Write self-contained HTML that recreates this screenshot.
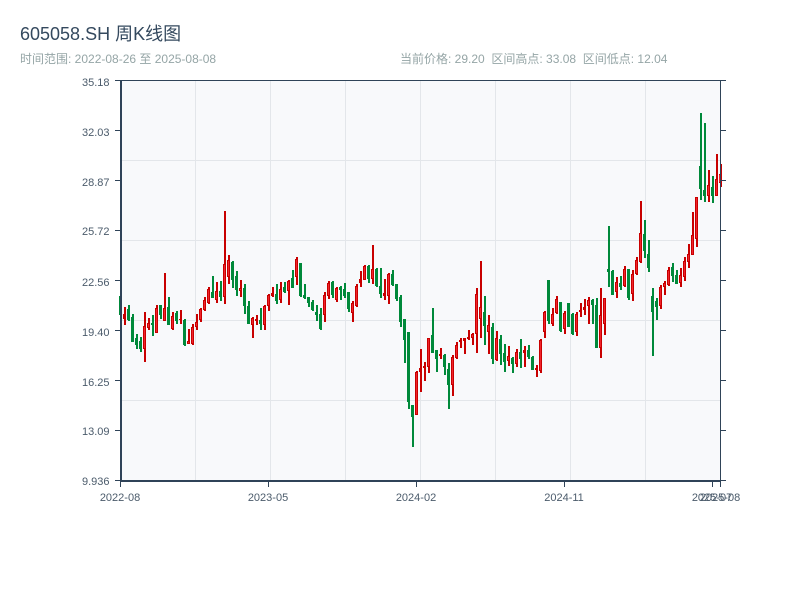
<!DOCTYPE html>
<html lang="zh">
<head>
<meta charset="utf-8">
<title>605058.SH 周K线图</title>
<style>
html,body{margin:0;padding:0;background:#fff;width:800px;height:600px;overflow:hidden}
svg{display:block;position:absolute;left:0;top:0}
text{font-family:"WenQuanYi Zen Hei","Liberation Sans",sans-serif}
</style>
</head>
<body>
<svg width="800" height="600" viewBox="0 0 800 600" xmlns="http://www.w3.org/2000/svg">
<rect x="0" y="0" width="800" height="600" fill="#fff"/>
<text x="20" y="40" font-size="18" fill="#34495e">605058.SH 周K线图</text>
<text x="20" y="63" font-size="12" fill="#95a5a6">时间范围: 2022-08-26 至 2025-08-08</text>
<text x="400" y="63" font-size="12" fill="#95a5a6" xml:space="preserve">当前价格: 29.20  区间高点: 33.08  区间低点: 12.04</text>

<rect x="121" y="81" width="600" height="400" fill="#f8f9fb"/>
<g shape-rendering="crispEdges" fill="#e3e6ea">
<rect x="121" y="160" width="599" height="1"/><rect x="121" y="240" width="599" height="1"/><rect x="121" y="320" width="599" height="1"/><rect x="121" y="400" width="599" height="1"/>
<rect x="195" y="81" width="1" height="399"/><rect x="270" y="81" width="1" height="399"/><rect x="345" y="81" width="1" height="399"/><rect x="420" y="81" width="1" height="399"/><rect x="495" y="81" width="1" height="399"/><rect x="570" y="81" width="1" height="399"/><rect x="645" y="81" width="1" height="399"/>
</g>

<g shape-rendering="crispEdges">
<path fill="#00893a" d="M119 296h3V315h-3zM128 305h2V321h-2zM127 309h3V320h-3zM132 314h2V342h-2zM131 317h3V342h-3zM136 334h2V349h-2zM135 338h3V345h-3zM140 337h2V352h-2zM139 341h3V349h-3zM152 315h2V336h-2zM151 323h3V325h-3zM160 305h2V319h-2zM159 305h3V315h-3zM168 297h2V325h-2zM167 307h3V325h-3zM176 311h2V324h-2zM175 313h3V321h-3zM184 319h2V346h-2zM183 320h3V345h-3zM212 276h2V298h-2zM211 292h3V298h-3zM220 281h2V301h-2zM219 291h3V297h-3zM232 261h2V288h-2zM231 262h3V280h-3zM236 271h2V296h-2zM235 276h3V290h-3zM244 284h2V314h-2zM243 288h3V306h-3zM248 301h2V324h-2zM247 306h3V324h-3zM260 308h2V330h-2zM259 320h3V324h-3zM276 284h2V304h-2zM275 294h3V301h-3zM284 282h2V293h-2zM283 287h3V292h-3zM292 270h2V288h-2zM291 278h3V288h-3zM300 263h2V297h-2zM299 263h3V296h-3zM304 284h2V299h-2zM303 295h3V298h-3zM308 297h2V307h-2zM307 297h3V303h-3zM312 300h2V311h-2zM311 302h3V310h-3zM316 305h2V321h-2zM315 312h3V315h-3zM320 308h2V330h-2zM319 314h3V329h-3zM332 281h2V298h-2zM331 282h3V295h-3zM340 286h2V300h-2zM339 287h3V290h-3zM344 283h2V298h-2zM343 289h3V296h-3zM348 292h2V312h-2zM347 292h3V309h-3zM368 265h2V283h-2zM367 266h3V279h-3zM376 268h2V287h-2zM375 269h3V286h-3zM380 268h2V298h-2zM379 286h3V294h-3zM392 270h2V286h-2zM391 274h3V285h-3zM396 284h2V301h-2zM395 284h3V299h-3zM400 295h2V327h-2zM399 297h3V322h-3zM404 319h2V363h-2zM403 319h3V340h-3zM408 332h2V409h-2zM407 332h3V402h-3zM412 405h2V447h-2zM411 405h3V417h-3zM432 308h2V353h-2zM431 335h3V353h-3zM436 350h2V372h-2zM435 350h3V359h-3zM444 354h2V375h-2zM443 355h3V367h-3zM448 363h2V409h-2zM447 369h3V385h-3zM484 296h2V345h-2zM483 312h3V326h-3zM492 323h2V364h-2zM491 327h3V359h-3zM500 335h2V365h-2zM499 339h3V354h-3zM504 344h2V372h-2zM503 353h3V362h-3zM512 357h2V373h-2zM511 358h3V364h-3zM520 339h2V368h-2zM519 352h3V359h-3zM528 345h2V359h-2zM527 350h3V357h-3zM532 356h2V370h-2zM531 357h3V370h-3zM548 280h2V324h-2zM547 280h3V321h-3zM560 302h2V332h-2zM559 302h3V331h-3zM568 303h2V327h-2zM567 303h3V327h-3zM572 313h2V335h-2zM571 314h3V334h-3zM592 299h2V324h-2zM591 300h3V305h-3zM596 298h2V348h-2zM595 305h3V348h-3zM608 226h2V287h-2zM607 269h3V272h-3zM612 270h2V295h-2zM611 271h3V295h-3zM620 276h2V290h-2zM619 283h3V287h-3zM628 269h2V300h-2zM627 269h3V298h-3zM644 220h2V258h-2zM643 234h3V251h-3zM648 240h2V272h-2zM647 254h3V268h-3zM652 288h2V356h-2zM651 296h3V312h-3zM656 298h2V320h-2zM655 301h3V307h-3zM672 263h2V282h-2zM671 267h3V276h-3zM676 270h2V284h-2zM675 275h3V284h-3zM700 113h2V200h-2zM699 166h3V189h-3zM704 123h2V202h-2zM703 190h3V196h-3zM712 176h2V203h-2zM711 187h3V196h-3z"/>
<path fill="#c80000" d="M124 307h2V325h-2zM123 314h3V319h-3zM144 312h2V362h-2zM143 326h3V349h-3zM148 318h2V330h-2zM147 323h3V328h-3zM156 305h2V333h-2zM155 308h3V333h-3zM164 273h2V321h-2zM163 308h3V321h-3zM172 312h2V330h-2zM171 316h3V329h-3zM180 310h2V324h-2zM179 319h3V320h-3zM188 329h2V344h-2zM187 341h3V344h-3zM192 324h2V345h-2zM191 327h3V344h-3zM196 314h2V330h-2zM195 322h3V327h-3zM200 308h2V322h-2zM199 309h3V320h-3zM204 297h2V311h-2zM203 300h3V310h-3zM208 287h2V304h-2zM207 289h3V303h-3zM216 282h2V303h-2zM215 291h3V300h-3zM224 211h2V304h-2zM223 264h3V297h-3zM228 255h2V284h-2zM227 260h3V277h-3zM240 280h2V297h-2zM239 288h3V291h-3zM252 317h2V338h-2zM251 318h3V325h-3zM256 315h2V325h-2zM255 319h3V321h-3zM264 305h2V330h-2zM263 306h3V325h-3zM268 294h2V311h-2zM267 295h3V306h-3zM272 287h2V297h-2zM271 293h3V296h-3zM280 282h2V303h-2zM279 289h3V300h-3zM288 280h2V305h-2zM287 281h3V291h-3zM296 257h2V285h-2zM295 259h3V277h-3zM324 292h2V322h-2zM323 295h3V315h-3zM328 281h2V299h-2zM327 283h3V296h-3zM336 287h2V302h-2zM335 288h3V300h-3zM352 301h2V322h-2zM351 303h3V313h-3zM356 284h2V307h-2zM355 286h3V306h-3zM360 271h2V287h-2zM359 279h3V283h-3zM364 265h2V280h-2zM363 266h3V280h-3zM372 245h2V284h-2zM371 269h3V279h-3zM384 279h2V300h-2zM383 293h3V296h-3zM388 273h2V304h-2zM387 274h3V296h-3zM416 371h2V415h-2zM415 372h3V415h-3zM420 349h2V392h-2zM419 368h3V372h-3zM424 362h2V381h-2zM423 366h3V368h-3zM428 338h2V373h-2zM427 338h3V367h-3zM440 348h2V359h-2zM439 354h3V356h-3zM452 355h2V396h-2zM451 357h3V385h-3zM456 342h2V359h-2zM455 345h3V358h-3zM460 338h2V348h-2zM459 340h3V342h-3zM464 338h2V354h-2zM463 338h3V341h-3zM468 330h2V340h-2zM467 337h3V339h-3zM472 333h2V345h-2zM471 334h3V338h-3zM476 288h2V353h-2zM475 294h3V334h-3zM480 261h2V338h-2zM479 307h3V319h-3zM488 315h2V354h-2zM487 325h3V332h-3zM496 331h2V361h-2zM495 338h3V360h-3zM508 346h2V366h-2zM507 356h3V361h-3zM516 349h2V367h-2zM515 352h3V364h-3zM524 346h2V367h-2zM523 350h3V353h-3zM536 365h2V377h-2zM535 368h3V370h-3zM540 339h2V373h-2zM539 340h3V371h-3zM544 311h2V338h-2zM543 312h3V332h-3zM552 308h2V326h-2zM551 314h3V324h-3zM556 296h2V314h-2zM555 299h3V313h-3zM564 311h2V334h-2zM563 313h3V329h-3zM576 312h2V336h-2zM575 314h3V332h-3zM580 303h2V317h-2zM579 310h3V312h-3zM584 299h2V315h-2zM583 307h3V310h-3zM588 297h2V324h-2zM587 300h3V306h-3zM600 288h2V358h-2zM599 315h3V348h-3zM604 298h2V335h-2zM603 298h3V324h-3zM616 277h2V298h-2zM615 282h3V292h-3zM624 266h2V287h-2zM623 269h3V286h-3zM632 270h2V301h-2zM631 274h3V294h-3zM636 257h2V275h-2zM635 260h3V274h-3zM640 201h2V263h-2zM639 233h3V262h-3zM660 285h2V309h-2zM659 287h3V306h-3zM664 281h2V295h-2zM663 283h3V287h-3zM668 267h2V286h-2zM667 270h3V285h-3zM680 268h2V287h-2zM679 275h3V283h-3zM684 257h2V281h-2zM683 261h3V277h-3zM688 244h2V268h-2zM687 254h3V262h-3zM692 212h2V255h-2zM691 235h3V255h-3zM696 197h2V247h-2zM695 197h3V239h-3zM708 170h2V202h-2zM707 185h3V196h-3zM716 154h2V196h-2zM715 179h3V196h-3zM720 164h2V187h-2zM719 174h3V183h-3z"/>
<path fill="#f0242c" d="M144 327h1V348h-1zM148 324h1V327h-1zM156 309h1V332h-1zM164 309h1V320h-1zM172 317h1V328h-1zM188 342h1V343h-1zM192 328h1V343h-1zM196 323h1V326h-1zM200 310h1V319h-1zM204 301h1V309h-1zM208 290h1V302h-1zM216 292h1V299h-1zM224 265h1V296h-1zM228 261h1V276h-1zM240 289h1V290h-1zM252 319h1V324h-1zM264 307h1V324h-1zM268 296h1V305h-1zM280 290h1V299h-1zM288 282h1V290h-1zM296 260h1V276h-1zM324 296h1V314h-1zM328 284h1V295h-1zM336 289h1V299h-1zM352 304h1V312h-1zM356 287h1V305h-1zM364 267h1V279h-1zM372 270h1V278h-1zM388 275h1V295h-1zM416 373h1V414h-1zM428 339h1V366h-1zM452 358h1V384h-1zM456 346h1V357h-1zM472 335h1V337h-1zM476 295h1V333h-1zM480 308h1V318h-1zM488 326h1V331h-1zM496 339h1V359h-1zM508 357h1V360h-1zM516 353h1V363h-1zM540 341h1V370h-1zM544 313h1V331h-1zM552 315h1V323h-1zM556 300h1V312h-1zM564 314h1V328h-1zM576 315h1V331h-1zM588 301h1V305h-1zM600 316h1V347h-1zM604 299h1V323h-1zM616 283h1V291h-1zM624 270h1V285h-1zM632 275h1V293h-1zM636 261h1V273h-1zM640 234h1V261h-1zM660 288h1V305h-1zM664 284h1V286h-1zM668 271h1V284h-1zM680 276h1V282h-1zM684 262h1V276h-1zM688 255h1V261h-1zM692 236h1V254h-1zM696 198h1V238h-1zM708 186h1V195h-1zM716 180h1V195h-1zM719 175h1V182h-1z"/>
</g>

<g shape-rendering="crispEdges" fill="#2f4358">
<rect x="120" y="80" width="2" height="402"/>
<rect x="120" y="80" width="600" height="1"/>
<rect x="120" y="480" width="600" height="2"/>
<rect x="720" y="80" width="1" height="402"/>
<rect x="115" y="80" width="5" height="1"/><rect x="115" y="130" width="5" height="1"/><rect x="115" y="180" width="5" height="1"/><rect x="115" y="230" width="5" height="1"/><rect x="115" y="280" width="5" height="1"/><rect x="115" y="330" width="5" height="1"/><rect x="115" y="380" width="5" height="1"/><rect x="115" y="430" width="5" height="1"/><rect x="115" y="480" width="5" height="1"/>
<rect x="721" y="80" width="5" height="1"/><rect x="721" y="130" width="5" height="1"/><rect x="721" y="180" width="5" height="1"/><rect x="721" y="230" width="5" height="1"/><rect x="721" y="280" width="5" height="1"/><rect x="721" y="330" width="5" height="1"/><rect x="721" y="380" width="5" height="1"/><rect x="721" y="430" width="5" height="1"/><rect x="721" y="480" width="5" height="1"/>
<rect x="120" y="482" width="1" height="5"/><rect x="268" y="482" width="1" height="5"/><rect x="416" y="482" width="1" height="5"/><rect x="564" y="482" width="1" height="5"/><rect x="712" y="482" width="1" height="5"/><rect x="720" y="482" width="1" height="5"/>
</g>

<g font-size="11" fill="#4b5b6b" text-anchor="end">
<text x="109.5" y="86">35.18</text>
<text x="109.5" y="136">32.03</text>
<text x="109.5" y="186">28.87</text>
<text x="109.5" y="235">25.72</text>
<text x="109.5" y="286">22.56</text>
<text x="109.5" y="336">19.40</text>
<text x="109.5" y="386">16.25</text>
<text x="109.5" y="435">13.09</text>
<text x="109.5" y="485">9.936</text>
</g>
<g font-size="11" fill="#4b5b6b" text-anchor="middle">
<text x="120" y="501">2022-08</text>
<text x="268" y="501">2023-05</text>
<text x="416" y="501">2024-02</text>
<text x="564" y="501">2024-11</text>
<text x="712" y="501">2025-07</text>
<text x="720" y="501">2025-08</text>
</g>
</svg>
</body>
</html>
